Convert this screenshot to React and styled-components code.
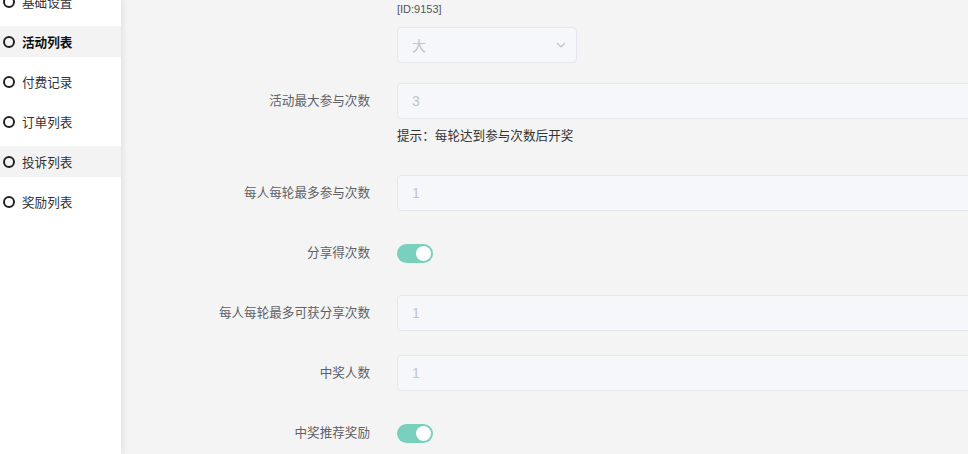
import React from "react";
import styled, { createGlobalStyle } from "styled-components";

const Global = createGlobalStyle`
  html, body { margin: 0; padding: 0; overflow: hidden; }
  body {
    font-family: "Liberation Sans", "Noto Sans CJK SC", sans-serif;
    background: #f4f4f4;
  }
  * { box-sizing: border-box; }
`;

const Page = styled.div`
  display: flex;
  width: 968px;
  height: 454px;
  overflow: hidden;
  background: #f4f4f4;
`;

const Sidebar = styled.aside`
  width: 121px;
  flex: none;
  background: #fff;
  box-shadow: 2px 0 6px rgba(0, 0, 0, 0.08);
  position: relative;
  z-index: 1;
`;

const NavList = styled.ul`
  list-style: none;
  margin: -14px 0 0;
  padding: 0;
  display: flex;
  flex-direction: column;
  gap: 9px;
`;

const NavItem = styled.li`
  height: 31px;
  display: flex;
  align-items: center;
  gap: 7px;
  padding-left: 3px;
  font-size: 12.6px;
  color: ${(p) => (p.$active ? "#111" : "#333")};
  font-weight: ${(p) => (p.$active ? 700 : 400)};
  background: ${(p) => (p.$shaded ? "#f3f3f3" : "transparent")};
`;

const Ring = styled.span`
  width: 12px;
  height: 12px;
  border: 2px solid #222;
  border-radius: 50%;
  flex: none;
`;

const Main = styled.main`
  flex: 1;
  min-width: 0;
  overflow: hidden;
`;

const Form = styled.div`
  display: flex;
  flex-direction: column;
`;

const Head = styled.div`
  padding-left: 276px;
  display: flex;
  flex-direction: column;
  gap: 9px;
  margin-bottom: 20px;
`;

const IdText = styled.div`
  font-size: 11px;
  line-height: 18px;
  color: #555;
`;

const Select = styled.div`
  width: 180px;
  height: 36px;
  border: 1px solid #e4e7ed;
  border-radius: 4px;
  background: #f5f7fa;
  display: flex;
  align-items: center;
  justify-content: space-between;
  padding: 0 10px 0 14px;
  color: #c0c4cc;
  font-size: 14px;
`;

const Row = styled.div`
  display: flex;
  align-items: flex-start;
  margin-bottom: 24px;
`;

const Label = styled.label`
  width: 276px;
  flex: none;
  padding-right: 27px;
  text-align: right;
  font-size: 12.6px;
  line-height: 36px;
  height: 36px;
  color: #606266;
  white-space: nowrap;
`;

const Control = styled.div`
  flex: 1;
  min-width: 600px;
  display: flex;
  flex-direction: column;
`;

const SwitchWrap = styled.div`
  height: 36px;
  display: flex;
  align-items: center;
`;

const Input = styled.div`
  height: 36px;
  border: 1px solid #e4e7ed;
  border-radius: 4px;
  background: #f5f7fa;
  padding: 0 14px;
  display: flex;
  align-items: center;
  color: #c0c4cc;
  font-size: 14px;
`;

const Hint = styled.div`
  font-size: 12.6px;
  line-height: 20px;
  color: #333;
  padding: 7px 0 5px;
`;

const Switch = styled.span`
  width: 36px;
  height: 19px;
  border-radius: 10px;
  background: #78d0bd;
  display: inline-flex;
  align-items: center;
  justify-content: flex-end;
  padding: 0 2px;
`;

const Knob = styled.span`
  width: 15px;
  height: 15px;
  border-radius: 50%;
  background: #fff;
`;

const Chevron = () => (
  <svg width="10" height="6" viewBox="0 0 10 6" fill="none">
    <path d="M1 1l4 4 4-4" stroke="#c0c4cc" strokeWidth="1.2" />
  </svg>
);

const nav = [
  { t: "基础设置" },
  { t: "活动列表", active: true, shaded: true },
  { t: "付费记录" },
  { t: "订单列表" },
  { t: "投诉列表", shaded: true },
  { t: "奖励列表" },
];

export default function App() {
  return (
    <>
      <Global />
      <Page>
        <Sidebar>
          <NavList>
            {nav.map((n) => (
              <NavItem key={n.t} $active={n.active} $shaded={n.shaded}>
                <Ring />
                {n.t}
              </NavItem>
            ))}
          </NavList>
        </Sidebar>
        <Main>
          <Form>
            <Head>
              <IdText>[ID:9153]</IdText>
              <Select>
                <span>大</span>
                <Chevron />
              </Select>
            </Head>
            <Row>
              <Label>活动最大参与次数</Label>
              <Control>
                <Input>3</Input>
                <Hint>提示：每轮达到参与次数后开奖</Hint>
              </Control>
            </Row>
            <Row>
              <Label>每人每轮最多参与次数</Label>
              <Control>
                <Input>1</Input>
              </Control>
            </Row>
            <Row>
              <Label>分享得次数</Label>
              <Control>
                <SwitchWrap>
                  <Switch>
                    <Knob />
                  </Switch>
                </SwitchWrap>
              </Control>
            </Row>
            <Row>
              <Label>每人每轮最多可获分享次数</Label>
              <Control>
                <Input>1</Input>
              </Control>
            </Row>
            <Row>
              <Label>中奖人数</Label>
              <Control>
                <Input>1</Input>
              </Control>
            </Row>
            <Row>
              <Label>中奖推荐奖励</Label>
              <Control>
                <SwitchWrap>
                  <Switch>
                    <Knob />
                  </Switch>
                </SwitchWrap>
              </Control>
            </Row>
          </Form>
        </Main>
      </Page>
    </>
  );
}
